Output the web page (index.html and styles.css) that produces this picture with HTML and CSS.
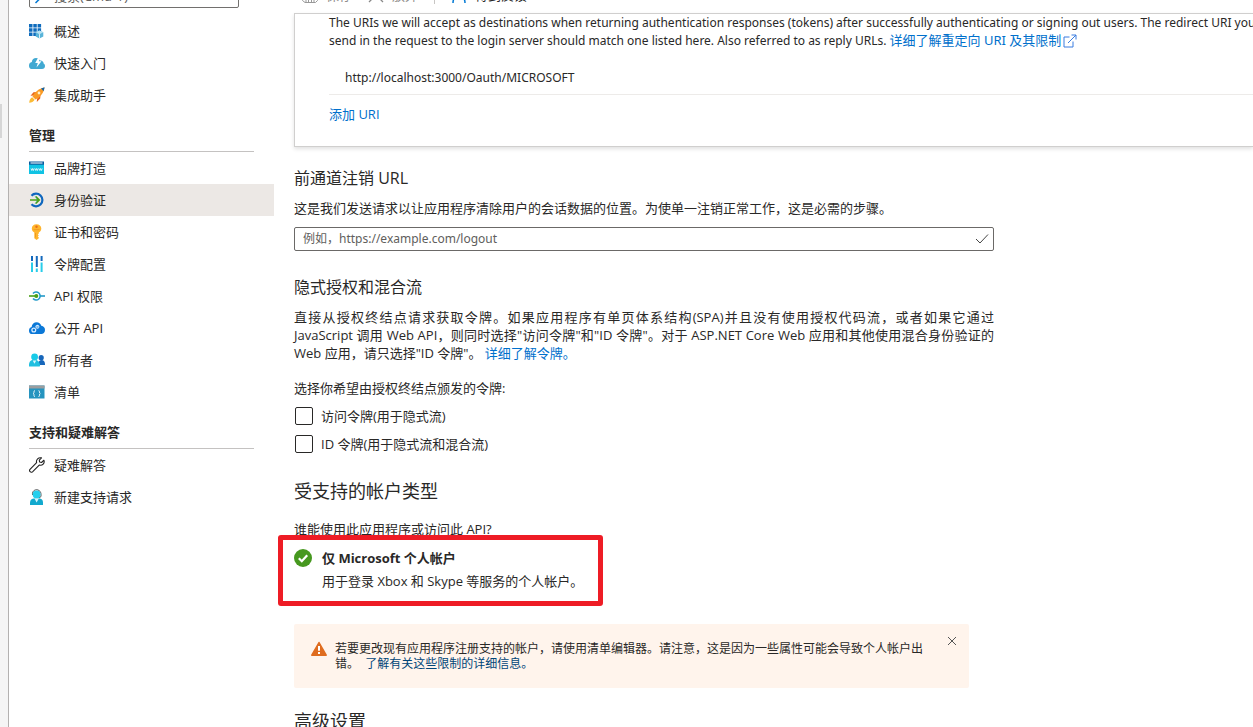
FILE: index.html
```html
<!DOCTYPE html>
<html lang="zh-CN">
<head>
<meta charset="utf-8">
<title>身份验证</title>
<link rel="stylesheet" href="styles.css">
</head>
<body>
<div class="portal">
  <div class="rail"><div class="rail-handle"></div></div>
  <nav class="sidebar" aria-label="应用注册">
    <div class="search-clip">
      <label class="search">
        <svg width="16" height="16" viewBox="0 0 16 16" fill="none" stroke="#0078d4" stroke-width="1.5"><circle cx="10" cy="6" r="4.5"/><path d="M7 9.500L1.500 15"/></svg>
        <input type="text" placeholder="搜索(Cmd+/)" aria-label="搜索">
      </label>
    </div>
    <ul class="menu">
      <li><a class="item" href="#"><svg class="icon" viewBox="0 0 16 16"><g fill="#0f6cbd"><path d="M0 1h3.500v3.500H0zM4.300 1h3.500v3.500H4.300zM8.600 1h3.500v3.500H8.600zM0 5.300h3.500v3.500H0zM4.300 5.300h3.500v3.500H4.300zM8.600 5.300h3.500v3.500H8.600zM0 9.600h3.500v3.500H0zM4.300 9.600h3.500v3.500H4.300z"/></g><path d="M10.500 7.500l3.800 1.800v4.200l-3.800 2-3.800-2V9.300z" fill="#59b4d9"/><path d="M10.500 7.500l3.800 1.800-3.800 1.900-3.800-1.900z" fill="#b8e2f2"/><path d="M10.500 11.200v4.300" stroke="#fff" stroke-width=".8"/></svg>概述</a></li>
      <li><a class="item" href="#"><svg class="icon" viewBox="0 0 16 16"><path d="M3.500 14A3.400 3.400 0 0 1 0 10.500C0 8.500 1.200 7.300 2.800 7 3 4.500 4.800 3 7 3c2 0 3.300.8 4.200 2.600C13.600 5.800 14.500 7 14.600 8.400 15.600 8.900 16 9.900 16 11c0 1.900-1.200 3-3 3z" fill="#41a9d2"/><path d="M9.500 2L6.200 8h2.600l-1.300 4.500L12.500 6.200H9.800L12 2z" fill="#fff"/></svg>快速入门</a></li>
      <li><a class="item" href="#"><svg class="icon" viewBox="0 0 16 16"><path d="M4.200 8.500L1.500 8.800 4.500 5.300l3.400-.3zM8 11.800L7.800 15l3.400-3.500.3-3.400z" fill="#e8661b"/><path d="M3.500 9.500C6 5 9.500 1.500 15.500.5c-.8 5.700-4.500 9.700-9 12z" fill="#fa9a25"/><path d="M12 1.400L15.600.3l-1 4z" fill="#1563a5"/><circle cx="10" cy="6" r="1.400" fill="#fff1c9"/><path d="M.2 15.800c.2-2.500 1-4.300 3-5.600l2.500 2.500c-1.300 2-3 2.800-5.500 3.100z" fill="#fbbb36"/></svg>集成助手</a></li>
    </ul>
    <h2 class="group">管理</h2>
    <ul class="menu">
      <li><a class="item" href="#"><svg class="icon" viewBox="0 0 16 16"><path d="M0 2.500h15V14H0z" fill="#10c3e4"/><path d="M0 1.500h15v3.200H0z" fill="#0b5a9d"/><path d="M1.500 2.500h12v1h-12z" fill="#fff"/><path d="M2 8.500l.8 2 .8-2 .8 2 .8-2M6 8.500l.8 2 .8-2 .8 2 .8-2M10 8.500l.8 2 .8-2 .8 2 .8-2" fill="none" stroke="#fff" stroke-width=".8"/></svg>品牌打造</a></li>
      <li><a class="item selected" href="#" aria-current="page"><svg class="icon" viewBox="0 0 16 16" fill="none"><path d="M2.500 3.700A6.300 6.300 0 1 1 2.500 12.300" stroke="#0f67be" stroke-width="2.200"/><path d="M5.500 3.800a4.800 4.800 0 0 1 0 8.400" stroke="#76c8e8" stroke-width="1"/><path d="M1 8h9M6.700 4.500L10.200 8l-3.500 3.500" stroke="#4aa018" stroke-width="1.700"/></svg>身份验证</a></li>
      <li><a class="item" href="#"><svg class="icon" viewBox="0 0 16 16"><path d="M7.500.3c2.800 0 4.800 1.800 4.800 4.300 0 1.900-1 3.200-2.500 4v1l-1 .9 1 1-1 1 1 1v.8l-2.200 1.600-2.300-1.700V8.600c-1.500-.8-2.500-2.100-2.500-4C2.800 2.100 4.700.3 7.500.3z" fill="#ffb52e"/><circle cx="7.500" cy="2.800" r="1.200" fill="#e86f19"/><path d="M4.500 5.700h6M6.500 9v4.500" stroke="#ef971d" stroke-width=".9"/></svg>证书和密码</a></li>
      <li><a class="item" href="#"><svg class="icon" viewBox="0 0 16 16"><path d="M2 0h2v5H2zM6.800 0h2v11h-2zM11.600 0h2v5h-2z" fill="#1469bd"/><path d="M2 6.500h2V16H2zM6.800 12.500h2V16h-2zM11.600 6.500h2V16h-2z" fill="#28cdea"/></svg>令牌配置</a></li>
      <li><a class="item" href="#"><svg class="icon" viewBox="0 0 16 16" fill="none"><path d="M4 5.500a4 4 0 1 1 0 5" stroke="#2199c8" stroke-width="1.500"/><path d="M11 8h5" stroke="#2199c8" stroke-width="1.600"/><path d="M0 8h6" stroke="#4aa018" stroke-width="1.600"/><circle cx="7.300" cy="8" r="2" fill="#4aa018"/></svg>API 权限</a></li>
      <li><a class="item" href="#"><svg class="icon" viewBox="0 0 16 16"><path d="M3.500 14A3.400 3.400 0 0 1 0 10.500C0 8.500 1.200 7.300 2.600 7 3 4 5 2.200 7.600 2.200c2.300 0 4 1.300 4.700 3.600C14.700 6.100 16 7.800 16 9.900 16 12.300 14.300 14 12.300 14z" fill="#0b78d7"/><circle cx="4.800" cy="10" r="1.900" fill="none" stroke="#d8ecff" stroke-width="1.300"/><circle cx="8.400" cy="6.800" r="2" fill="#d8ecff"/><path d="M7 5.500l3 3M10 5.500l-3 3" stroke="#0b78d7" stroke-width=".5"/></svg>公开 API</a></li>
      <li><a class="item" href="#"><svg class="icon" viewBox="0 0 16 16"><path d="M9.500 13v-1.200C9.500 9.300 10.700 8 12.600 8c2 0 3.200 1.400 3.400 3.800V13z" fill="#1766ba"/><circle cx="12.200" cy="5.700" r="2.600" fill="#1766ba"/><path d="M0 14.500v-1.700C0 9.800 2 7.500 5.200 7.500S10.500 9.800 11 12.800c.1.900 0 1.700-.5 1.700z" fill="#20bfe0"/><circle cx="5.600" cy="4.900" r="3.400" fill="#18cbe8"/><path d="M3.700 8.500l1.800 3.300 1.700-3.300z" fill="#d9f7fd"/></svg>所有者</a></li>
      <li><a class="item" href="#"><svg class="icon" viewBox="0 0 16 16"><path d="M0 1.500h15.500v13H0z" fill="#2594bf"/><path d="M0 1.500h15.500v3H0z" fill="#9b9d9f"/><path d="M6 6.800H5.300L5 7.500v1.300l-.8.700.8.700v1.500l.3.700H6M9.500 6.800h.7l.3.700v1.300l.8.700-.8.700v1.500l-.3.700h-.7" fill="none" stroke="#fff" stroke-width=".9"/></svg>清单</a></li>
    </ul>
    <h2 class="group">支持和疑难解答</h2>
    <ul class="menu">
      <li><a class="item" href="#"><svg class="icon" viewBox="0 0 16 16" fill="none" stroke="#222" stroke-width="1.100" stroke-linejoin="round"><path d="M14.900 3.200L12.600 5.500 10.600 5 10.300 3.200 12.500.9C9.500.1 6.800 2.500 7.600 5.700L1 12.300c-1.400 1.600.8 3.900 2.500 2.500l6.700-6.700C13.500 8.900 16 6.200 14.900 3.200z"/></svg>疑难解答</a></li>
      <li><a class="item" href="#"><svg class="icon" viewBox="0 0 16 16"><path d="M3.500 6C2.500-1 12.500-1 12 6v1.500L10 9" fill="none" stroke="#55585a" stroke-width="1"/><path d="M1 16v-2.500c0-2.700 2-4 4-4h5c2.500 0 4 1.500 4 4V16z" fill="#12a9ce"/><circle cx="7.600" cy="5.500" r="3.900" fill="#25cfed"/><path d="M5.500 9.500l2.100 4 2.200-4z" fill="#d9f7fd"/></svg>新建支持请求</a></li>
    </ul>
  </nav>

  <main class="content">
    <div class="toolbar-clip">
      <div class="toolbar">
        <button class="tool" disabled><svg class="icon" viewBox="0 0 16 16" fill="none" stroke="#999"><path d="M.5.5h15v13l-2 2H3l-2.500-2zM4 15V10h8v5M6.500 12v3M9.500 12v3"/></svg>保存</button>
        <button class="tool" disabled><svg class="icon" viewBox="0 0 16 16" fill="none" stroke="#888" stroke-width="1.300"><path d="M1 1l14 14M15 1L1 15"/></svg>放弃</button>
        <span class="divider"></span>
        <button class="tool"><svg class="icon" viewBox="0 0 16 16" fill="none" stroke="#0078d4" stroke-width="1.500"><circle cx="8" cy="5" r="4"/><path d="M2 16c0-4 2-6.500 6-6.500s6 2.500 6 6.500"/></svg>得到反馈</button>
      </div>
    </div>

    <section class="card">
      <p class="card-text latin">The URIs we will accept as destinations when returning authentication responses (tokens) after successfully authenticating or signing out users. The redirect URI you<br>send in the request to the login server should match one listed here. Also referred to as reply URLs. <a class="link cjk" href="#">详细了解重定向 URI 及其限制<svg class="external" width="14" height="14" viewBox="0 0 14 14" fill="none" stroke="#3b7de0"><path d="M6.500 3H1v10h9V7.500M5 9L13 1M8.500 1H13v4.500"/></svg></a></p>
      <div class="uri latin">http://localhost:3000/Oauth/MICROSOFT</div>
      <a class="link" href="#">添加 URI</a>
    </section>

    <section class="block">
      <h3 class="subtitle">前通道注销 URL</h3>
      <p class="para"><label for="logout">这是我们发送请求以让应用程序清除用户的会话数据的位置。为使单一注销正常工作，这是必需的步骤。</label></p>
      <div class="field">
        <input id="logout" class="latin" type="text" placeholder="例如，https://example.com/logout">
        <svg width="14" height="12" viewBox="0 0 14 12" fill="none" stroke="#444"><path d="M1 6l4 4L13 1.500"/></svg>
      </div>
    </section>

    <section class="block grants">
      <h3 class="subtitle">隐式授权和混合流</h3>
      <p class="para justified">直接从授权终结点请求获取令牌。如果应用程序有单页体系结构(SPA)并且没有使用授权代码流，或者如果它通过 JavaScript 调用 Web API，则同时选择"访问令牌"和"ID 令牌"。对于 ASP.NET Core Web 应用和其他使用混合身份验证的 Web 应用，请只选择"ID 令牌"。 <a class="link" href="#">详细了解令牌。</a></p>
      <fieldset class="choices">
        <legend>选择你希望由授权终结点颁发的令牌:</legend>
        <label class="choice"><input type="checkbox">访问令牌(用于隐式流)</label>
        <label class="choice"><input type="checkbox">ID 令牌(用于隐式流和混合流)</label>
      </fieldset>
    </section>

    <section class="block accounts">
      <h2 class="title">受支持的帐户类型</h2>
      <p class="question">谁能使用此应用程序或访问此 API?</p>
      <div class="account">
        <svg width="18" height="18" viewBox="0 0 18 18"><circle cx="9" cy="9" r="9" fill="#46981f"/><path d="M4.800 9.200l3 3 5.400-6" fill="none" stroke="#fff" stroke-width="2.200"/></svg>
        <div>
          <strong class="account-name">仅 Microsoft 个人帐户</strong>
          <p class="account-desc">用于登录 Xbox 和 Skype 等服务的个人帐户。</p>
        </div>
        <div class="highlight"></div>
      </div>
    </section>

    <div class="notice" role="status">
      <svg width="16" height="16" viewBox="0 0 16 16"><path d="M8 1.500L15.200 14.200H.8z" fill="#df6c1f" stroke="#df6c1f" stroke-width="1.500" stroke-linejoin="round"/><path d="M7 5h2v4.800H7zM7 11h2v2H7z" fill="#fff"/></svg>
      <p class="notice-text">若要更改现有应用程序注册支持的帐户，请使用清单编辑器。请注意，这是因为一些属性可能会导致个人帐户出错。 &nbsp;<a class="notice-link" href="#">了解有关这些限制的详细信息。</a></p>
      <button class="close" aria-label="关闭"><svg width="10" height="10" viewBox="0 0 10 10" fill="none" stroke="#555"><path d="M1 1l8 8M9 1L1 9"/></svg></button>
    </div>

    <h2 class="title">高级设置</h2>
  </main>
</div>
</body>
</html>
```
FILE: styles.css
```css
* { box-sizing: border-box; }
body {
  margin: 0;
  overflow: hidden;
  background: #fff;
  color: #292827;
  font: 13px/18px "Open Sans", "Noto Sans CJK SC", sans-serif;
}
h2, h3, p, ul { margin: 0; padding: 0; font-weight: 400; }
button, input { font: inherit; color: inherit; }
a { text-decoration: none; color: inherit; }
.link { color: #0070cc; }
.icon { width: 16px; height: 16px; flex: none; }

.portal { display: flex; height: 100vh; overflow: hidden; }
.rail { flex: none; width: 9px; background: #f5f5f5; border-right: 1px solid #b3b1b0; padding-top: 104px; }
.rail-handle { width: 2px; height: 34px; background: #d6d6d6; }

.sidebar { flex: none; width: 265px; }
.search-clip { display: flex; align-items: flex-end; height: 8px; margin: 0 35px 7px 20px; overflow: hidden; }
.search { flex: none; display: flex; align-items: center; gap: 4px; width: 100%; height: 24px; padding: 0 4px; border: 1px solid #72706e; border-radius: 2px; }
.search input { flex: 1; min-width: 0; border: 0; padding: 0; outline: 0; background: none; }
.menu { list-style: none; }
.item { display: flex; align-items: center; gap: 9px; height: 32px; padding-left: 20px; }
.selected { background: #ece8e5; }
.group { margin: 0 20px; padding: 15px 0 7px; border-bottom: 1px solid #c4c2c1; font-size: 13px; font-weight: 700; }

.content { flex: 1; min-width: 0; padding-left: 20px; }
.toolbar-clip { display: flex; align-items: flex-end; height: 4px; margin-bottom: 9px; overflow: hidden; }
.toolbar { flex: none; display: flex; align-items: center; gap: 16px; height: 18px; padding-left: 8px; }
.tool { display: flex; align-items: center; gap: 8px; padding: 0; border: 0; background: none; }
.tool:disabled { color: #8f8d8b; }
.divider { width: 1px; height: 18px; background: #c8c6c4; }

.card { padding: 0 0 23px 34px; border: 1px solid #d0cfce; border-right: 0; box-shadow: 0 2px 4px rgba(0, 0, 0, .12); }
.card-text { white-space: nowrap; margin-bottom: 12px; }
.latin { font-family: "Noto Sans", "Noto Sans CJK SC", sans-serif; font-size: 12px; }
.cjk { font-size: 13px; line-height: 16px; }
.external { vertical-align: -3px; margin-left: 2px; }
.uri { padding: 7px 16px; margin-bottom: 10px; border-bottom: 1px solid #edebe9; }

.block { width: 700px; max-width: 100%; }
.subtitle { font-size: 16px; line-height: 22px; margin-top: 20px; }
.para { margin: 10px 0; }
.field { display: flex; align-items: center; height: 24px; padding-right: 4px; border: 1px solid #6b6967; border-radius: 2px; }
.field input { flex: 1; min-width: 0; padding: 0 8px; border: 0; outline: 0; background: none; }
.field input::placeholder, .search input::placeholder { color: #605e5c; opacity: 1; }
.grants { padding-top: 5px; }
.justified { text-align: justify; }
.choices { margin: 17px 0 0; padding: 0; border: 0; }
.choices legend { padding: 0; margin-bottom: 9px; }
.choice { display: flex; align-items: center; gap: 8px; height: 20px; }
.choice + .choice { margin-top: 8px; }
.choice input { appearance: none; width: 18px; height: 18px; margin: 0 0 0 1px; border: 1px solid #292827; border-radius: 2px; }

.accounts { padding-top: 4px; }
.title { font-size: 18px; line-height: 24px; margin-top: 21px; }
.question { margin-top: 17px; }
.account { position: relative; display: flex; gap: 10px; padding-top: 11px; }
.account-name { display: block; font-weight: 700; }
.account-desc { margin-top: 5px; }
.highlight { position: absolute; left: -16px; top: -3px; width: 325px; height: 71px; border: 5px solid #ee1c25; border-radius: 3px; }

.notice { display: flex; align-items: flex-start; gap: 8px; width: 675px; max-width: 100%; min-height: 64px; margin-top: 34px; padding: 17px 12px 16px 17px; border-radius: 2px; background: #fff4ec; font-size: 12px; line-height: 15px; }
.notice-text { width: 592px; }
.notice-link { color: #004578; }
.close { display: flex; margin-left: auto; margin-top: -5px; padding: 0; border: 0; background: none; }
```
